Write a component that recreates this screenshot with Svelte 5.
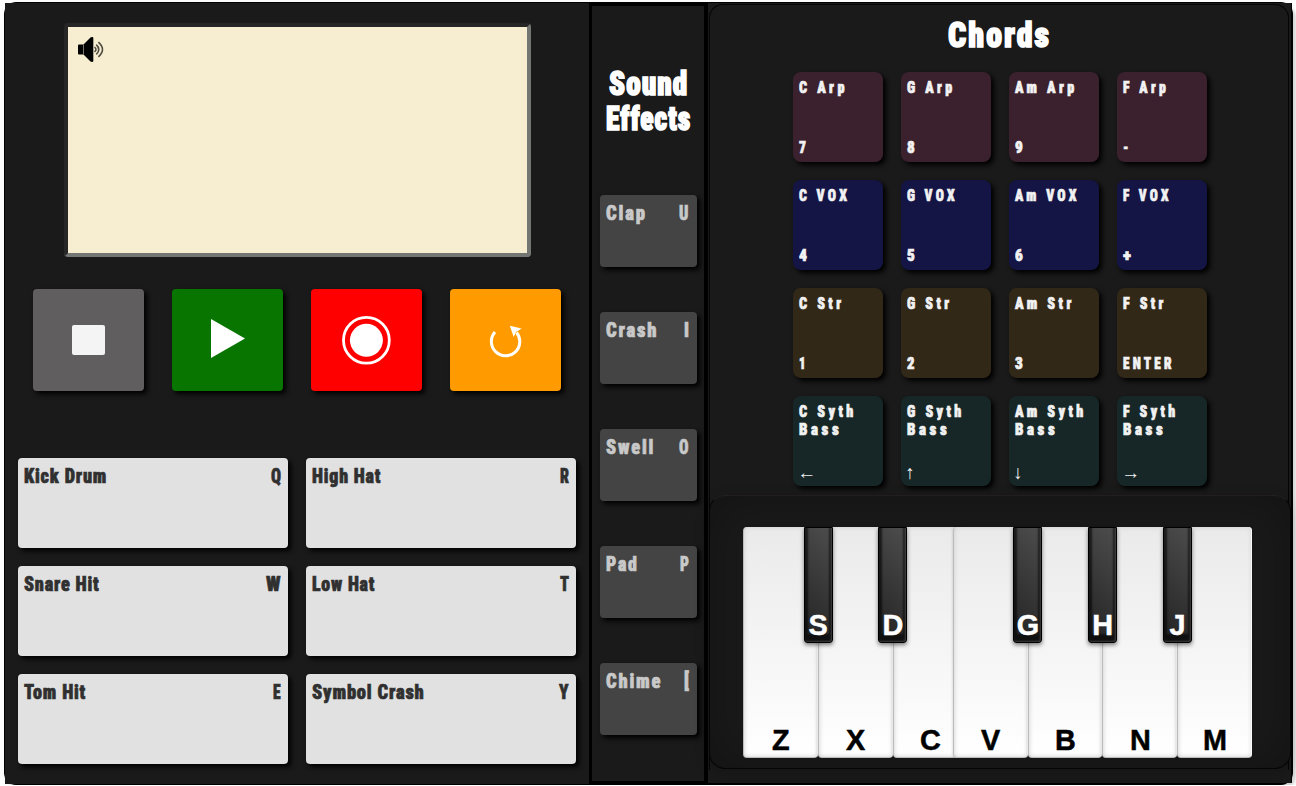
<script>
  const drums = [
    ['Kick Drum', 82.5, 'Q', 10], ['High Hat', 68.5, 'R', 9],
    ['Snare Hit', 75, 'W', 14.6], ['Low Hat', 62.5, 'T', 9],
    ['Tom Hit', 61.5, 'E', 7.6], ['Symbol Crash', 112, 'Y', 9.5]
  ];
  const effects = [
    ['Clap', 39.3, 'U', 9.4], ['Crash', 51, 'I', 5], ['Swell', 47.7, 'O', 9.5],
    ['Pad', 31.3, 'P', 8.9], ['Chime', 55, '[', 5]
  ];
  const chords = [
    ['plum', [['C Arp', 46], ['7', 7]]], ['plum', [['G Arp', 45.6], ['8', 7.8]]],
    ['plum', [['Am Arp', 59.7], ['9', 7.8]]], ['plum', [['F Arp', 43.3], ['-', 5.5]]],
    ['navy', [['C VOX', 48.5], ['4', 8]]], ['navy', [['G VOX', 48], ['5', 7.8]]],
    ['navy', [['Am VOX', 62], ['6', 7.8]]], ['navy', [['F VOX', 45.8], ['+', 8]]],
    ['brown', [['C Str', 42.7], ['1', 6.5]]], ['brown', [['G Str', 42.7], ['2', 7.5]]],
    ['brown', [['Am Str', 57], ['3', 7.8]]], ['brown', [['F Str', 41], ['ENTER', 49]]],
    ['teal', [['C Syth', 55], ['←', 14]]], ['teal', [['G Syth', 55], ['↑', 7]]],
    ['teal', [['Am Syth', 69], ['↓', 7]]], ['teal', [['F Syth', 52.7], ['→', 14]]]
  ];
  const keys = [
    ['Z', ''], ['X', 'S'], ['C', 'D'], ['V', ''], ['B', 'G'], ['N', 'H'], ['M', 'J']
  ];
</script>

{#snippet label(text, w, cap, gap)}
  <svg class="label" width={w} height={cap}>
    <text x="0" y={cap} font-size={cap / 0.711} letter-spacing={text.length > 1 ? gap : 0}
      stroke-width={cap > 20 ? 1.6 : 0.7}
      textLength={text.length > 1 ? w + gap * 0.7 : w} lengthAdjust="spacingAndGlyphs">{text}</text>
  </svg>
{/snippet}

<main>
  <section class="left">
    <div class="screen">
      <svg width="26" height="26" viewBox="0 0 26 26">
        <path d="M1 7.5h4v10H1a1 1 0 0 1-1-1v-8a1 1 0 0 1 1-1z" />
        <path d="M5.500 7.500 12.500 .5Q15-.8 15.300 1v23q-.3 1.500-2.800 .5L5.500 17.500z" />
        <g fill="none" stroke="#4d4a42" stroke-width="1.6">
          <path d="M16.500 10.2q3 2.3 0 4.6M18.300 7.600q5 4.900 0 9.800M20.400 5.200q8.200 7.300 0 14.600" />
        </g>
      </svg>
    </div>
    <div class="transport">
      <button class="stop" aria-label="Stop"><svg width="111" height="102"><rect x="39" y="36" width="33" height="30" rx="2" fill="#f4f4f4" /></svg></button>
      <button class="play" aria-label="Play"><svg width="111" height="102"><path d="M39 30v39L73 49.500z" fill="#fff" /></svg></button>
      <button class="record" aria-label="Record"><svg width="111" height="102"><circle cx="55.400" cy="51.300" r="22.900" fill="none" stroke="#fff" stroke-width="2.800" /><circle cx="55.400" cy="51.300" r="16.500" fill="#fff" /></svg></button>
      <button class="loop" aria-label="Loop"><svg width="111" height="102"><path d="M45 43.100A14.200 14.200 0 1 0 66.500 43.500" fill="none" stroke="#fff" stroke-width="3" /><path d="M59.800 36.800 71.500 39.500 68.300 41.800 66 43 63.700 48z" fill="#fff" /></svg></button>
    </div>
    <div class="drums">
      {#each drums as [name, w, key, kw]}
        <button>{@render label(name, w, 14.6, 0.9)}{@render label(key, kw, 14.6, 0)}</button>
      {/each}
    </div>
  </section>

  <section class="effects">
    <h2>{@render label('Sound', 78.500, 23, 1.2)}{@render label('Effects', 84.500, 23, 1.2)}</h2>
    {#each effects as [name, w, key, kw]}
      <button>{@render label(name, w, 14.6, 2)}{@render label(key, kw, 14.6, 0)}</button>
    {/each}
  </section>

  <section class="right">
    <div class="chords">
      <h1>{@render label('Chords', 101.500, 24.500, 2.200)}</h1>
      <div class="grid">
        {#each chords as [tone, [[name, w], [key, kw]]]}
          <button class={tone}>
            {@render label(name, w, 11.8, 4)}
            {#if tone === 'teal'}
              <span class="second">{@render label('Bass', 40.500, 11.8, 4)}</span>
              <span class="arrow">{key}</span>
            {:else}
              <span class="key">{@render label(key, kw, 11.8, 4)}</span>
            {/if}
          </button>
        {/each}
      </div>
      <div class="piano">
        {#each keys as [white, black]}
          <div class="white" class:overlap={white === 'V'}>{white}{#if black}<div class="black">{black}</div>{/if}</div>
        {/each}
      </div>
    </div>
  </section>
</main>

<style>
  :global(body) { background: #fff; }
  main {
    box-sizing: border-box;
    display: flex;
    width: 1289px;
    height: 783px;
    margin: 2px 0 0 4px;
    border: 1px solid #000;
    border-radius: 12px;
    background: #000;
    box-shadow: 0 0 10px rgba(0, 0, 0, 0.04), 3px 4px 3px rgba(0, 0, 0, 0.15);
  }
  section { box-sizing: border-box; background: #1a1a1a; }
  button {
    box-sizing: border-box;
    border: 0;
    padding: 0;
    margin: 0;
    box-shadow: 3px 3px 5px #000;
    border-radius: 4px;
    text-align: left;
  }
  .label { display: block; flex: none; overflow: visible; }
  .label text {
    font-family: Roboto, sans-serif;
    font-weight: 900;
    font-stretch: 75%;
    fill: currentColor;
    stroke: currentColor;
    white-space: pre;
  }
  .left { width: 584px; height: 781px; padding-top: 20px; }
  .screen {
    box-sizing: border-box;
    width: 467px;
    height: 234px;
    margin-left: 59px;
    padding: 10px;
    background: #f7edd0;
    border: 4px solid;
    border-color: #262626 #737672 #737672 #262626;
    border-radius: 4px;
  }
  .screen svg { display: block; }
  .transport { display: flex; gap: 28px; margin: 32px 0 0 28px; }
  .transport button { width: 111px; height: 102px; }
  .transport svg { display: block; }
  .stop { background: #605e5f; }
  .play { background: #077500; }
  .record { background: #f00; }
  .loop { background: #ff9b00; }
  .drums {
    display: grid;
    grid-template-columns: 270px 270px;
    grid-auto-rows: 90px;
    gap: 18px;
    margin: 67px 0 0 13px;
  }
  .drums button {
    display: flex;
    justify-content: space-between;
    padding: 10.4px 7.5px 0 6.4px;
    background: #e1e1e1;
    color: #303030;
  }
  .effects {
    width: 119px;
    height: 781px;
    border: solid #000;
    border-width: 3px 4px 3px 3px;
    padding: 65.5px 0 0 8px;
  }
  h1, h2 { margin: 0; color: #fff; font-size: 16px; }
  h2 { box-sizing: border-box; display: flex; flex-direction: column; align-items: center; gap: 12px; width: 96px; height: 123.5px; }
  .effects button {
    display: flex;
    justify-content: space-between;
    width: 97px;
    height: 72px;
    margin-bottom: 45px;
    padding: 10.4px 8.5px 0 6.2px;
    background: #444;
    color: #c9c9c9;
  }
  .right { width: 584px; height: 780px; padding: 1px 2px 0 1px; border-right: 1px solid #000; }
  .chords {
    box-sizing: border-box;
    height: 766px;
    border: 1px solid #050505;
    border-bottom: 0;
    border-radius: 14px 14px 0 0;
    padding-top: 17px;
  }
  h1 { margin-left: 238.3px; height: 50px; }
  .grid {
    display: grid;
    grid-template-columns: repeat(4, 90px);
    grid-auto-rows: 90px;
    gap: 18px;
    margin-left: 83px;
  }
  .grid button {
    display: flex;
    flex-direction: column;
    border-radius: 8px;
    padding: 9.2px 0 9px 5.8px;
    color: #f2f2f2;
  }
  .plum { background: #3b202e; }
  .navy { background: #141445; }
  .brown { background: #322817; }
  .teal { background: #172727; }
  .key { margin-top: auto; }
  .second { margin-top: 6.3px; }
  .arrow {
    margin-top: auto;
    height: 9px;
    margin-left: -1.5px;
    font: bold 19px/9px "Liberation Serif", serif;
  }
  .piano {
    box-sizing: border-box;
    display: flex;
    width: 582px;
    height: 274px;
    margin: 9px 0 0 -1px;
    padding: 31px 0 0 33px;
    border: 1px solid #050505;
    border-top-color: #231f1f;
    border-radius: 16px;
    background: #1a1a1a;
    box-shadow: inset 0 0 50px rgba(0, 0, 0, 0.3), 0 5px 15px rgba(0, 0, 0, 0.2);
  }
  .white {
    position: relative;
    box-sizing: border-box;
    width: 74.8px;
    height: 231px;
    padding-top: 196px;
    text-align: center;
    font: bold 28.8px/34px "Liberation Sans", Arial, sans-serif;
    -webkit-text-stroke: 0.5px currentColor;
    color: #000;
    border-left: 1px solid #bbb;
    border-bottom: 1px solid #bbb;
    border-radius: 4px;
    background: linear-gradient(#eaeaea, #fff);
    box-shadow: inset -1px 0 rgba(255, 255, 255, 0.8), inset 0 0 5px #ccc, 0 0 3px rgba(0, 0, 0, 0.2);
  }
  .overlap { margin-left: -14.6px; }
  .black {
    position: absolute;
    z-index: 2;
    left: -15.2px;
    top: 0;
    box-sizing: border-box;
    width: 29px;
    height: 116px;
    padding-top: 80px;
    color: #fff;
    border: 1px solid #000;
    border-radius: 0 0 3px 3px;
    background: linear-gradient(45deg, #222, #4d4d4d);
    box-shadow: inset -1px -1px 2px rgba(255, 255, 255, 0.2), inset 0 -5px 2px 3px rgba(0, 0, 0, 0.6), 0 2px 4px rgba(0, 0, 0, 0.5);
    display: flex;
    justify-content: center;
  }
</style>
